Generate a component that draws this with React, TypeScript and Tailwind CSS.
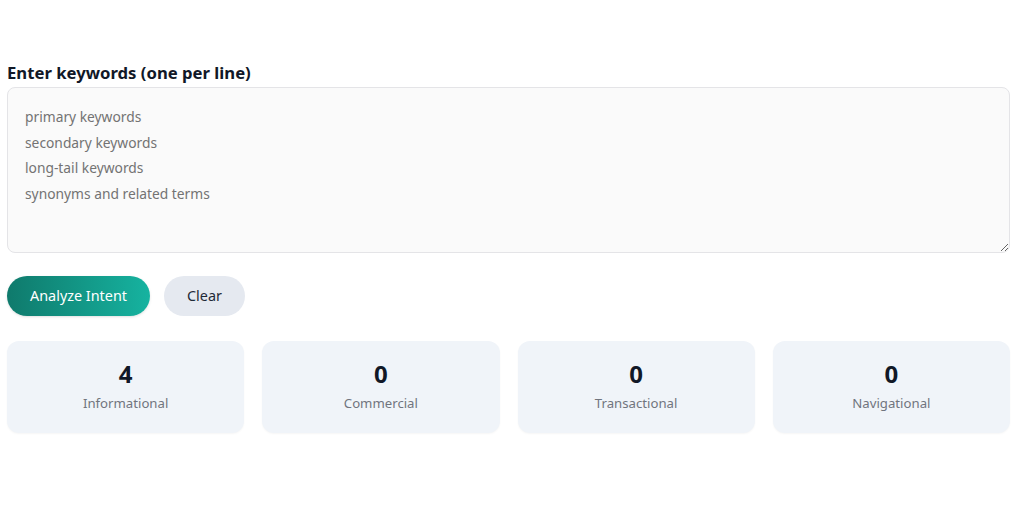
import React from "react";

const stats = [
  { n: 4, label: "Informational" },
  { n: 0, label: "Commercial" },
  { n: 0, label: "Transactional" },
  { n: 0, label: "Navigational" },
];

export default function App() {
  return (
    <div
      className="w-[1024px] h-[532px] bg-white pl-[7px] pr-[14px] pt-[63px]"
      style={{ fontFamily: '"Noto Sans", "Open Sans", sans-serif' }}
    >
      <label className="block text-[16.7px] font-bold leading-[20px] text-[#111827] mb-[4px]">
        Enter keywords (one per line)
      </label>
      <textarea
        className="block w-full h-[166px] rounded-[8px] border border-[#e4e4e7] bg-[#fafafa] px-[17px] pt-[16px] text-[13.8px] leading-[25.6px] text-[#374151] placeholder:text-[#737373] outline-none"
        placeholder={"primary keywords\nsecondary keywords\nlong-tail keywords\nsynonyms and related terms"}
      />
      <div className="flex gap-[14px] mt-[23px]">
        <button className="h-[40px] px-[23px] rounded-full bg-gradient-to-r from-[#0f7a6c] to-[#16b3a0] text-white text-[14.4px] shadow-sm">
          Analyze Intent
        </button>
        <button className="h-[40px] px-[23px] rounded-full bg-[#e5e9f0] text-[#1f2937] text-[14.4px]">
          Clear
        </button>
      </div>
      <div className="grid grid-cols-4 gap-[18px] mt-[25px]">
        {stats.map((s) => (
          <div
            key={s.label}
            className="h-[92px] rounded-[12px] bg-[#f0f4f9] shadow-[0_1px_2px_rgba(0,0,0,0.04)] flex flex-col items-center pt-[17px]"
          >
            <div className="text-[24px] font-bold leading-[32px] text-[#111827]">{s.n}</div>
            <div className="text-[13.2px] leading-[20px] text-[#70757e] mt-[3px]">{s.label}</div>
          </div>
        ))}
      </div>
    </div>
  );
}
